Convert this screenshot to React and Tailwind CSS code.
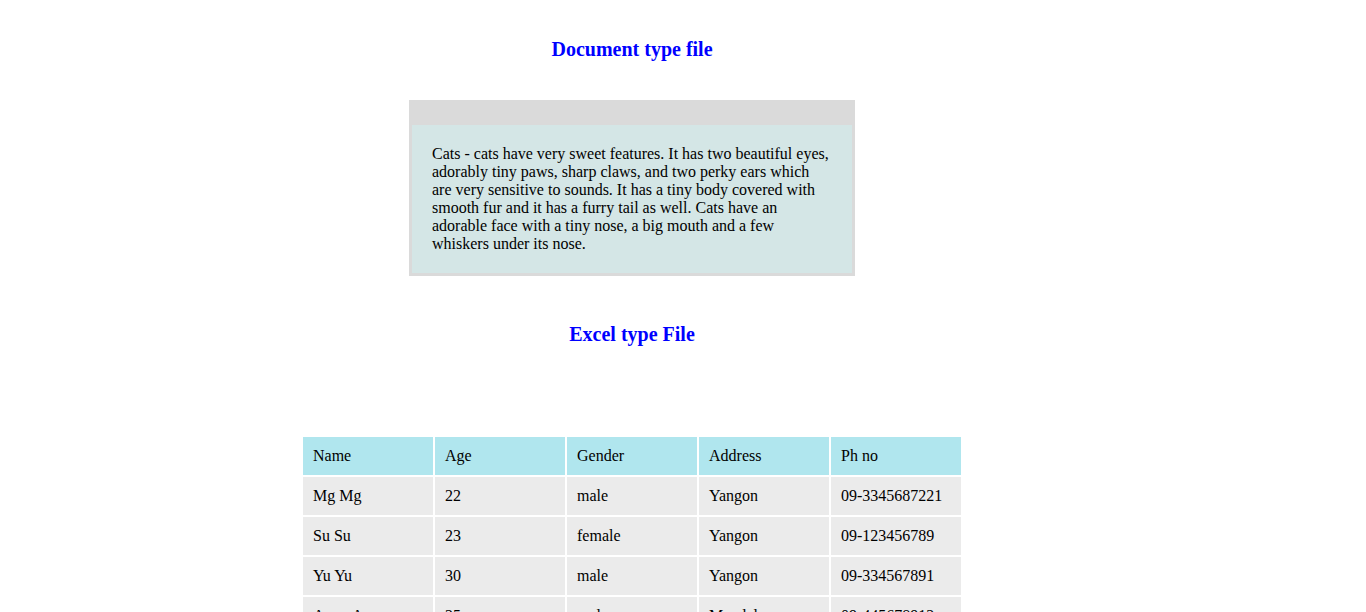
import React from "react";

const rows = [
    ["Mg Mg", "22", "male", "Yangon", "09-3345687221"],
    ["Su Su", "23", "female", "Yangon", "09-123456789"],
    ["Yu Yu", "30", "male", "Yangon", "09-334567891"],
    ["Aung Aung", "25", "male", "Mandalay", "09-445678912"],
];

export default function App() {
    return (
        <div className="min-w-[1440px] min-h-[1980px] bg-white text-black font-['Liberation_Serif',serif]">
            <div className="w-[1264px] flex flex-col items-center">
                {/* Document section */}
                <h3 className="mt-[38px] text-[20px] leading-[23px] font-bold text-[#0000ff]">Document type file</h3>

                <div className="mt-[39px] w-[446px] bg-[#dadada] px-[3px] pt-[25px] pb-[3px]">
                    <div className="bg-[#d4e6e6] p-5">
                        <p className="text-base leading-[18px]">
                            Cats - cats have very sweet features. It has two beautiful eyes, adorably tiny paws, sharp claws, and two perky ears which are very sensitive to sounds. It has a tiny body covered with smooth fur and it has a furry tail as well. Cats have an adorable face with a tiny nose, a big mouth and a few whiskers under its nose.
                        </p>
                    </div>
                </div>

                {/* Excel section */}
                <h3 className="mt-[47px] text-[20px] leading-[23px] font-bold text-[#0000ff]">Excel type File</h3>

                <table className="mt-[89px] border-separate border-spacing-[2px] text-base leading-[18px]">
                    <thead>
                        <tr>
                            {["Name", "Age", "Gender", "Address", "Ph no"].map((h) => (
                                <th key={h} className="w-[130px] bg-[#b0e6ee] px-[10px] py-[10px] text-left font-normal">
                                    {h}
                                </th>
                            ))}
                        </tr>
                    </thead>
                    <tbody>
                        {rows.map((r) => (
                            <tr key={r[0]}>
                                {r.map((c, i) => (
                                    <td key={i} className="w-[130px] bg-[#ebebeb] px-[10px] py-[10px]">
                                        {c}
                                    </td>
                                ))}
                            </tr>
                        ))}
                    </tbody>
                </table>
            </div>
        </div>
    );
}
